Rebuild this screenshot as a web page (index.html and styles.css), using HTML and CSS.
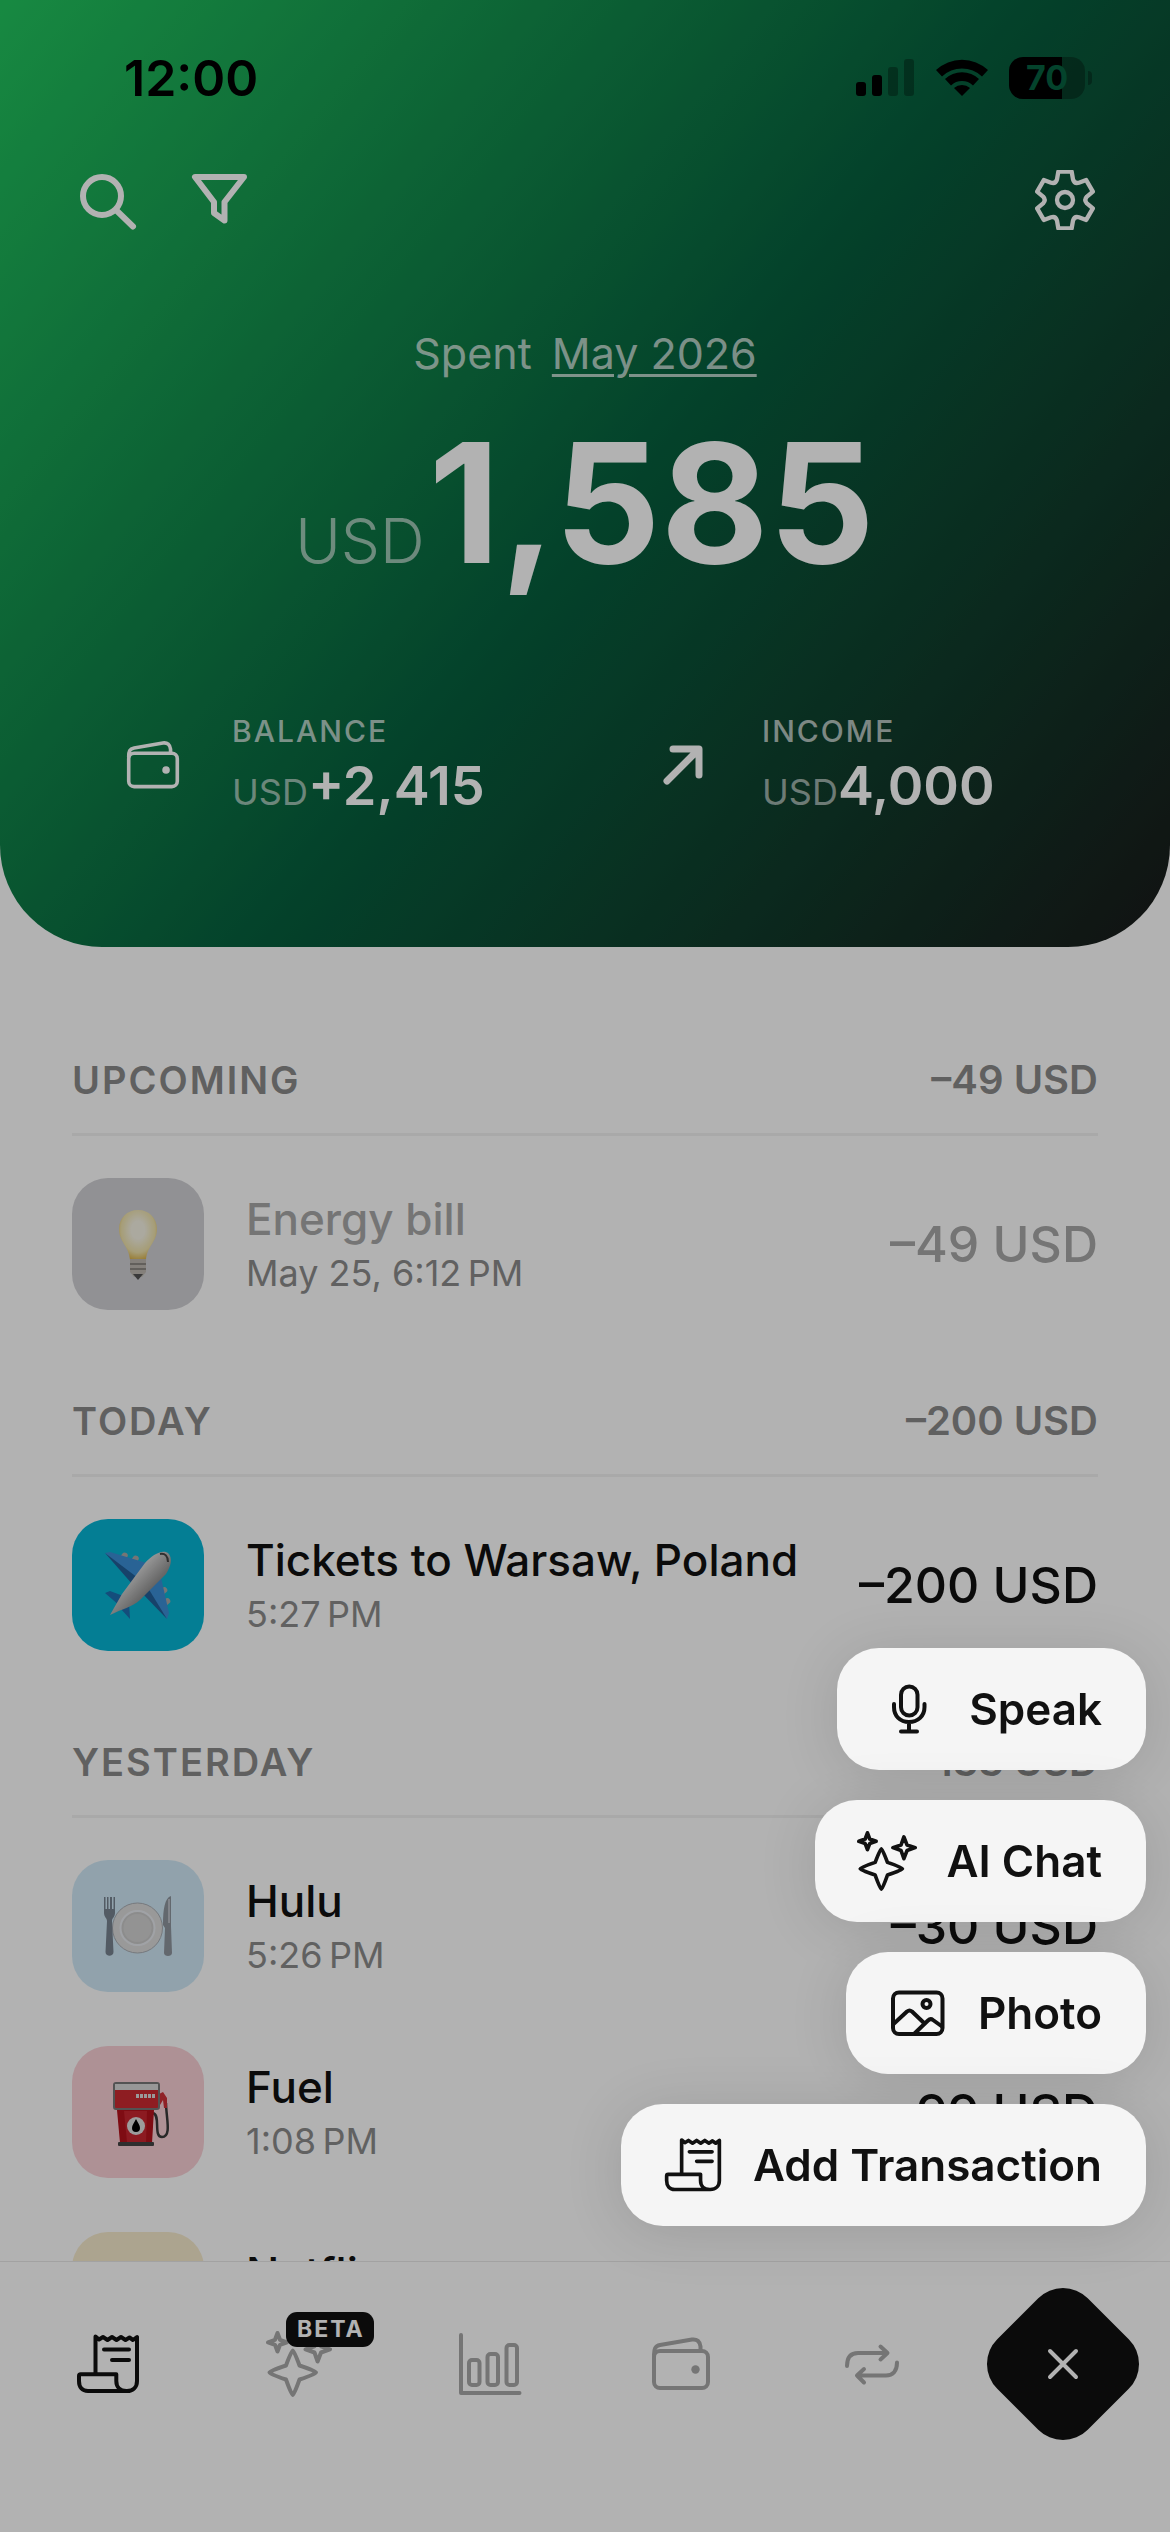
FILE: index.html
```html
<!DOCTYPE html>
<html lang="en">
<head>
  <meta charset="UTF-8">
  <meta name="viewport" content="width=device-width, initial-scale=1.0">
  <title>Spending</title>
  <link rel="stylesheet" href="styles.css">
</head>
<body>
  <!-- shared icons -->
  <svg class="sprite" aria-hidden="true">
    <symbol id="i-receipt" viewBox="0 0 66 66">
      <path d="M20.500 43V5.500l3.500 3 4-2.500 4.500 3 4.500-3 4.500 3 4.500-3 4.500 3 4-2.500 3.500 2.500 4-3V50c0 6-4 10-10 10H13c-6 0-9-4-9-10v-5c0-1 .700-1.700 1.700-1.700H41.300V50c0 6 4 10 10 10"/>
      <path d="M29 18.500H54M37 29H54"/>
    </symbol>
    <symbol id="i-sparkles" viewBox="0 0 66 66">
      <path d="M26.800 19.500Q28 19.500 33.500 34.500Q50 40 50 41.500Q50 43 33.500 48.500Q28 64 26.800 64Q25.500 64 20 48.500Q3.500 43 3.500 41.500Q3.500 40 20 34.500Q25.500 19.500 26.800 19.500Z"/>
      <path d="M11.500 2L14 8.800 21 11.300 14 13.800 11.500 20.500 9 13.800 2 11.300 9 8.800Z"/>
      <path d="M51.600 6.500L55 15.300 64 18.300 55 21.500 51.600 30.500 48.500 21.500 39.500 18.300 48.500 15.300Z"/>
    </symbol>
    <symbol id="i-wallet" viewBox="0 0 60 60">
      <rect x="3" y="17" width="54" height="37" rx="6"/>
      <path d="M3 21c0-6 1-9 6-10L41 5.500c5-.700 8 2 8.500 7V16"/>
      <circle class="dot" cx="44.500" cy="35.500" r="4.200"/>
    </symbol>
  </svg>

  <header class="hero">
    <div class="status">
      <span class="clock">12:00</span>
      <div class="status-icons">
        <svg width="60" height="42" viewBox="0 0 60 42" aria-hidden="true">
          <rect x="1" y="25" width="10" height="14" rx="3"/>
          <rect x="17" y="18" width="10" height="21" rx="3"/>
          <rect x="33" y="10" width="10" height="29" rx="3" opacity=".3"/>
          <rect x="49" y="2" width="10" height="37" rx="3" opacity=".3"/>
        </svg>
        <svg width="52" height="42" viewBox="0 0 52 42" aria-hidden="true">
          <path d="M0 13a38 38 0 0 1 52 0l-6 6.500a29 29 0 0 0-40 0z"/>
          <path d="M9 22a25 25 0 0 1 34 0l-6 6.500a16 16 0 0 0-22 0z"/>
          <path d="M18 31a12 12 0 0 1 16 0l-8 8z"/>
        </svg>
        <span class="battery">70</span>
      </div>
    </div>

    <div class="toolbar">
      <div class="toolbar-left">
        <button type="button" class="icon-btn" aria-label="Search">
          <svg width="60" height="60" viewBox="0 0 60 60"><circle cx="25" cy="26" r="19"/><path d="M39 40L56 56.500"/></svg>
        </button>
        <button type="button" class="icon-btn" aria-label="Filter">
          <svg width="60" height="60" viewBox="0 0 60 60"><path d="M5 7H54L34.500 32V50.500L24 43V32Z"/></svg>
        </button>
      </div>
      <button type="button" class="icon-btn thin" aria-label="Settings">
        <svg width="60" height="60" viewBox="-90 -90 180 180">
          <path d="M-20-85H20L24-62Q28-48 41.700-51.800L63.600-59.800 83.600-25.200 65.700-10.200Q56 0 65.700 10.200L83.600 25.200 63.600 59.800 41.700 51.800Q28 48 24 62L20 85H-20L-24 62Q-28 48-41.700 51.800L-63.600 59.800-83.600 25.200-65.700 10.200Q-56 0-65.700-10.200L-83.600-25.200-63.600-59.800-41.700-51.800Q-28-48-24-62Z"/>
          <circle r="24"/>
        </svg>
      </button>
    </div>

    <p class="period">Spent <a href="#">May 2026</a></p>
    <h1 class="total"><span>USD</span>1,585</h1>

    <div class="stats">
      <div class="stat">
        <svg class="stat-icon" width="54" height="54"><use href="#i-wallet"/></svg>
        <div>
          <div class="stat-label">Balance</div>
          <div class="stat-value"><span>USD</span>+2,415</div>
        </div>
      </div>
      <div class="stat">
        <svg class="stat-icon bold" width="54" height="54" viewBox="0 0 54 54"><path d="M11 43L42 12M17 11H43V37"/></svg>
        <div>
          <div class="stat-label">Income</div>
          <div class="stat-value"><span>USD</span>4,000</div>
        </div>
      </div>
    </div>
  </header>

  <main class="list">
    <section class="day">
      <h2 class="day-head"><span>Upcoming</span><b>–49 USD</b></h2>
      <div class="row muted">
        <div class="tile gray">
          <svg width="72" height="72" viewBox="0 0 72 72">
            <defs>
              <radialGradient id="glow" cx=".5" cy=".4" r=".6"><stop offset=".3" stop-color="#fffbe8"/><stop offset=".75" stop-color="#f6e6a0"/><stop offset="1" stop-color="#e0b030"/></radialGradient>
            </defs>
            <path d="M36 2c-11 0-19 8-19 19 0 13 10 17 11 31h16c1-14 11-18 11-31 0-11-8-19-19-19z" fill="url(#glow)"/>
            <path d="M28 51h16v13l-4 5h-8l-4-5z" fill="#b9b3a8"/>
            <path d="M28 56h16M28 61h16" stroke="#7d786f" stroke-width="2"/>
            <path d="M31 66h10l-5 6z" fill="#333"/>
          </svg>
        </div>
        <div class="info"><h3>Energy bill</h3><p>May 25, 6:12&#8201;PM</p></div>
        <div class="amount">–49 USD</div>
      </div>
    </section>

    <section class="day">
      <h2 class="day-head"><span>Today</span><b>–200 USD</b></h2>
      <div class="row">
        <div class="tile cyan">
          <svg width="72" height="72" viewBox="0 0 72 72">
            <defs>
              <linearGradient id="hull" x1="0" y1="0" x2="1" y2="1"><stop offset=".3" stop-color="#ececec"/><stop offset=".65" stop-color="#8c8c8c"/></linearGradient>
            </defs>
            <path d="M3 44l5-2 16 6-6 9zM28 70l-1-17-6-2-3 8z" fill="#1d6fb0"/>
            <rect x="18" y="3" width="6" height="12" rx="3" transform="rotate(35 21 9)" fill="#a8a8a8"/>
            <rect x="29" y="6" width="6" height="12" rx="3" transform="rotate(35 32 12)" fill="#a8a8a8"/>
            <rect x="57" y="37" width="6" height="12" rx="3" transform="rotate(50 60 43)" fill="#a8a8a8"/>
            <rect x="60" y="48" width="6" height="12" rx="3" transform="rotate(50 63 54)" fill="#a8a8a8"/>
            <path d="M3 4l5-1 40 12-16 19z" fill="#3b8fd6"/>
            <path d="M3 4l28 32 5-7z" fill="#225f98"/>
            <path d="M65 70l2-6-9-40-17 17z" fill="#3b8fd6"/>
            <path d="M65 70L36 40l7-6z" fill="#225f98"/>
            <path d="M8 66L20 45 43 14C50 6 60 0 66 4c5 5 3 13-2 21L38 51C30 58 20 60 8 66z" fill="url(#hull)"/>
            <path d="M58 5c5-1 8 2 8 8" fill="none" stroke="#444" stroke-width="2"/>
          </svg>
        </div>
        <div class="info"><h3>Tickets to Warsaw, Poland</h3><p>5:27&#8201;PM</p></div>
        <div class="amount">–200 USD</div>
      </div>
    </section>

    <section class="day">
      <h2 class="day-head"><span>Yesterday</span><b>–133 USD</b></h2>
      <div class="row">
        <div class="tile sky">
          <svg width="72" height="72" viewBox="0 0 72 72">
            <circle cx="35.500" cy="38" r="25" fill="#dcdcdc" stroke="#a9adb3"/>
            <circle cx="35.500" cy="38" r="17" fill="#c9c9c9" stroke="#e6e9ee" stroke-width="2"/>
            <circle cx="35.500" cy="38" r="14" fill="#d3d3d3"/>
            <path d="M2 7v16c0 4 3 5 3 8L3.500 62c0 5 8 5 8 0L10 31c0-3 3-4 3-8V7h-1.500v12H10V7H8v12H6.500V7H5v12H3.500V7z" fill="#788390"/>
            <path d="M69 6c-6 2-8 12-8 29l2 3-1 25c0 4 8 4 8 0l-1-27z" fill="#8f959e"/>
            <path d="M67 9v24" stroke="#b9bec6" stroke-width="2"/>
          </svg>
        </div>
        <div class="info"><h3>Hulu</h3><p>5:26&#8201;PM</p></div>
        <div class="amount">–30 USD</div>
      </div>
      <div class="row">
        <div class="tile pink">
          <svg width="72" height="72" viewBox="0 0 72 72">
            <path d="M51 37c8 2 0 24 9 24 10 0 4-20 4-34" fill="none" stroke="#3a3a3a" stroke-width="2.500"/>
            <path d="M57 18l4-2 4 6v10h-3l-1-8-3 5z" fill="#cf3138"/>
            <path d="M15 34H52L50 67H18z" fill="#b5121c"/>
            <path d="M22 35H45L44 66H25z" fill="#c92630"/>
            <rect x="12" y="7" width="45" height="26" rx="2" fill="#cc2a31" stroke="#777" stroke-width="2"/>
            <rect x="13" y="8" width="43" height="6" fill="#d9d9d9"/>
            <path d="M34 20H53" stroke="#ddd" stroke-width="4" stroke-dasharray="3 1"/>
            <rect x="16" y="66" width="36" height="4" rx="1" fill="#444"/>
            <circle cx="34" cy="50" r="9" fill="#e0e0e0"/>
            <path d="M34 43c2 4 4 6 4 9a4 4 0 0 1-8 0c0-3 2-5 4-9z"/>
          </svg>
        </div>
        <div class="info"><h3>Fuel</h3><p>1:08&#8201;PM</p></div>
        <div class="amount">–99 USD</div>
      </div>
      <div class="row">
        <div class="tile sand"></div>
        <div class="info"><h3>Netflix</h3><p>1:02&#8201;PM</p></div>
        <div class="amount">–4 USD</div>
      </div>
    </section>
  </main>

  <nav class="tabs">
    <a class="tab active" href="#" aria-label="Transactions"><svg width="66" height="66"><use href="#i-receipt"/></svg></a>
    <a class="tab" href="#" aria-label="AI chat"><svg width="66" height="66"><use href="#i-sparkles"/></svg><span class="badge">BETA</span></a>
    <a class="tab" href="#" aria-label="Charts">
      <svg width="66" height="66" viewBox="0 0 66 66"><path d="M4 4V62H62.500"/><rect x="12" y="29" width="10.500" height="25" rx="3"/><rect x="30.500" y="23" width="10.500" height="31" rx="3"/><rect x="49.500" y="14" width="10.500" height="40" rx="3"/></svg>
    </a>
    <a class="tab" href="#" aria-label="Wallets"><svg width="60" height="60"><use href="#i-wallet"/></svg></a>
    <a class="tab" href="#" aria-label="Recurring">
      <svg width="60" height="60" viewBox="0 0 60 60"><path d="M5 32C5 23 9 19 16 19H45M38.500 12.500L45.500 19 38.500 25.500M55 28.500C55 37 51 41.500 44 41.500H15M22 35L15 41.500 22 48.500"/></svg>
    </a>
    <button type="button" class="fab" aria-label="Close menu">
      <svg width="36" height="36" viewBox="0 0 36 36"><path d="M5 5L31 31M31 5L5 31"/></svg>
    </button>
  </nav>

  <div class="overlay"></div>

  <div class="menu">
    <button type="button" class="menu-item">
      <svg width="60" height="60" viewBox="0 0 60 60"><rect x="22" y="7.500" width="16.500" height="29" rx="8.250"/><path d="M15 25V28C15 37 21 43 30 43S45.500 37 45.500 28V25M30 43V52.500M22 52.500H38"/></svg>
      Speak
    </button>
    <button type="button" class="menu-item">
      <svg width="60" height="60"><use href="#i-sparkles"/></svg>
      AI Chat
    </button>
    <button type="button" class="menu-item">
      <svg width="60" height="60" viewBox="0 0 60 60"><rect x="5" y="9.500" width="49.500" height="41.500" rx="6"/><circle cx="38.500" cy="21" r="4"/><path d="M5.500 41L19 28.500Q21.500 26.500 24 28.500L36 40M26.500 50.500L40 37.500Q42.500 35 45 37L54 43.500"/></svg>
      Photo
    </button>
    <button type="button" class="menu-item">
      <svg width="60" height="60"><use href="#i-receipt"/></svg>
      Add Transaction
    </button>
  </div>
</body>
</html>
```
FILE: styles.css
```css
* {
  box-sizing: border-box;
  margin: 0;
}
html {
  height: 100%;
}
body {
  display: flex;
  flex-direction: column;
  height: 100%;
  overflow: hidden;
  background: #fff;
  color: #111;
  font-family: Inter, "Liberation Sans", sans-serif;
}
button {
  border: 0;
  padding: 0;
  background: none;
  color: inherit;
  font: inherit;
}
svg {
  display: block;
  flex: none;
}
.sprite {
  position: absolute;
  width: 0;
  height: 0;
}

/* hero */
.hero {
  flex: none;
  padding: 51px 72px 118px;
  border-radius: 0 0 102px 102px;
  background: linear-gradient(129deg, #22c55e 0%, #065e3d 53%, #1a1a1a 100%);
  color: #fff;
}
.status {
  display: flex;
  justify-content: space-between;
  align-items: center;
  height: 54px;
  padding: 0 13px 0 52px;
  color: #000;
}
.clock {
  font-size: 50px;
  font-weight: 600;
}
.status-icons {
  display: flex;
  align-items: center;
  gap: 21px;
}
.battery {
  position: relative;
  width: 76px;
  height: 42px;
  border-radius: 14px;
  background: linear-gradient(90deg, #000 70%, rgba(0, 0, 0, 0.3) 70%);
  color: #066040;
  font-size: 34px;
  font-weight: 700;
  line-height: 42px;
  text-align: center;
}
.battery::after {
  content: "";
  position: absolute;
  top: 14px;
  right: -7px;
  width: 4px;
  height: 14px;
  border-radius: 0 4px 4px 0;
  background: rgba(0, 0, 0, 0.3);
}
.toolbar {
  display: flex;
  justify-content: space-between;
  padding: 65px 3px 0 5px;
}
.toolbar-left {
  display: flex;
  gap: 53px;
}
.icon-btn svg {
  fill: none;
  stroke: currentColor;
  stroke-width: 6;
  stroke-linecap: round;
  stroke-linejoin: round;
}
.icon-btn.thin svg {
  stroke-width: 13;
}
.period {
  margin-top: 96px;
  color: rgba(255, 255, 255, 0.7);
  font-size: 43px;
  line-height: 54px;
  text-align: center;
}
.period a {
  margin-left: 8px;
  color: inherit;
  text-underline-offset: 5px;
  text-decoration-thickness: 3px;
}
.total {
  margin-top: 21px;
  font-size: 166px;
  font-weight: 700;
  line-height: 204px;
  text-align: center;
}
.total span {
  margin-right: 4px;
  color: rgba(255, 255, 255, 0.6);
  font-size: 62px;
  font-weight: 300;
}
.stats {
  display: grid;
  grid-template-columns: 1fr 1fr;
  margin-top: 70px;
  padding-left: 54px;
  gap: 88px;
}
.stat {
  display: flex;
  align-items: center;
  gap: 52px;
}
.stat-icon {
  margin-bottom: 12px;
  fill: none;
  stroke: currentColor;
  stroke-width: 4;
  stroke-linecap: round;
  stroke-linejoin: round;
}
.stat-icon.bold {
  stroke-width: 7;
}
.dot {
  fill: currentColor;
  stroke: none;
}
.stat-label {
  color: rgba(255, 255, 255, 0.7);
  font-size: 30px;
  font-weight: 500;
  line-height: 36px;
  letter-spacing: 2px;
  text-transform: uppercase;
}
.stat-value {
  font-size: 54px;
  font-weight: 600;
  line-height: 74px;
}
.stat-value span {
  color: rgba(255, 255, 255, 0.6);
  font-size: 36px;
  font-weight: 400;
}

/* transactions */
.list {
  flex: 1;
  min-height: 0;
  overflow: hidden;
  padding: 109px 72px 0;
}
.day {
  margin-bottom: 87px;
}
.day-head {
  display: flex;
  justify-content: space-between;
  padding-bottom: 29px;
  border-bottom: 3px solid #f3f3f3;
  color: #8a8a8a;
  font-size: 38px;
  font-weight: 600;
  line-height: 48px;
}
.day-head span {
  letter-spacing: 2px;
  text-transform: uppercase;
}
.day-head b {
  font-size: 40px;
  font-weight: 600;
}
.row {
  display: flex;
  align-items: center;
  margin-top: 42px;
}
.row + .row {
  margin-top: 54px;
}
.tile {
  display: grid;
  place-items: center;
  flex: none;
  width: 132px;
  height: 132px;
  margin-right: 42px;
  border-radius: 36px;
}
.gray { background: #d0d0d4; }
.cyan { background: #07b5d5; }
.sky { background: #d0e9f7; }
.pink { background: #f9d0d6; }
.sand { background: #f7ebcd; }
.info {
  flex: 1;
}
.info h3 {
  font-size: 44px;
  font-weight: 500;
  line-height: 57px;
}
.info p {
  color: #8c8c8c;
  font-size: 36px;
  line-height: 50px;
}
.amount {
  font-size: 50px;
  font-weight: 500;
}
.muted h3,
.muted .amount {
  color: #a8a8a8;
}
.muted svg {
  opacity: 0.8;
}

/* bottom tabs */
.tabs {
  display: grid;
  grid-template-columns: repeat(6, 1fr);
  align-items: center;
  flex: none;
  height: 271px;
  padding: 0 12px 66px;
  border-top: 1px solid #e8e8e8;
}
.tab {
  position: relative;
  display: grid;
  place-items: center;
  color: #a8a8a8;
}
.tab.active {
  color: #111;
}
.tab svg,
.fab svg,
.menu-item svg {
  fill: none;
  stroke: currentColor;
  stroke-width: 4;
  stroke-linecap: round;
  stroke-linejoin: round;
}
.badge {
  position: absolute;
  top: -19px;
  left: 83px;
  padding: 0 9px 0 11px;
  border-radius: 11px;
  background: #111;
  color: #fff;
  font-size: 23px;
  font-weight: 700;
  line-height: 35px;
  letter-spacing: 2px;
}
.fab {
  display: grid;
  place-items: center;
  justify-self: center;
  width: 128px;
  height: 128px;
  border-radius: 35px;
  background: #111;
  color: #fff;
  transform: rotate(45deg);
}
.fab svg {
  transform: rotate(45deg);
}

/* add menu */
.overlay {
  position: fixed;
  inset: 0;
  background: rgba(0, 0, 0, 0.3);
}
.menu {
  position: fixed;
  right: 24px;
  bottom: 306px;
  display: flex;
  flex-direction: column;
  align-items: flex-end;
  gap: 30px;
}
.menu-item {
  display: flex;
  align-items: center;
  gap: 30px;
  height: 122px;
  padding: 0 44px 0 42px;
  border-radius: 42px;
  background: #f5f5f5;
  box-shadow: 0 6px 60px rgba(0, 0, 0, 0.12);
  font-size: 44px;
  font-weight: 600;
}
```
